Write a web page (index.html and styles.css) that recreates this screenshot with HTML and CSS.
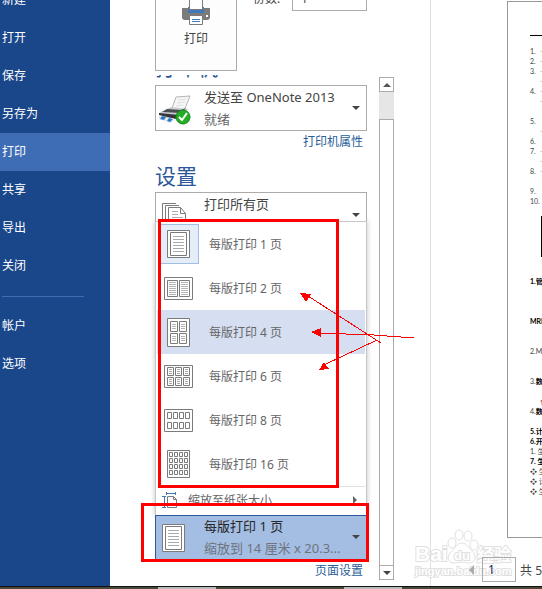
FILE: index.html
```html
<!DOCTYPE html>
<html lang="zh-CN">
<head>
    <meta charset="UTF-8">
    <meta name="viewport" content="width=device-width, initial-scale=1.0">
    <title>打印</title>
    <link rel="stylesheet" href="styles.css">
</head>
<body>

    <div class="window">
        <nav class="sidebar">
            <a href="#">新建</a>
            <a href="#">打开</a>
            <a href="#">保存</a>
            <a href="#">另存为</a>
            <a href="#" class="active">打印</a>
            <a href="#">共享</a>
            <a href="#">导出</a>
            <a href="#">关闭</a>
            <hr>
            <a href="#">帐户</a>
            <a href="#">选项</a>
        </nav>

        <main class="print-panel">
            <div class="print-header">
                <button type="button" class="print-button">
                    <svg width="28" height="32" viewBox="0 0 28 32">
                        <path d="M0 15h28v9a3 3 0 0 1-3 3H3a3 3 0 0 1-3-3z" fill="#7b7b7b"/>
                        <path d="M6 14h16v6H6z" fill="#3f7ab8"/>
                        <path d="M7.500 5.500h13v11h-13z" fill="#fff" stroke="#7b7b7b"/>
                        <path d="M7.500 22.500h13v9h-13z" fill="#fff" stroke="#7b7b7b"/>
                        <path d="M10 26.500h8M10 28.500h8" stroke="#3f7ab8"/>
                        <path d="M24 22h2v2h-2z" fill="#fff"/>
                    </svg>
                    <span>打印</span>
                </button>
                <label for="copies">份数:</label>
                <input type="text" id="copies" class="copies" value="1">
            </div>

            <div class="scroll-area">
                <div class="options">
                    <h2 class="printer-title">打印机</h2>
                    <button type="button" class="combo">
                        <svg class="combo-icon" width="36" height="32" viewBox="0 0 36 32">
                            <path d="M18 3l14-1-6 15H13z" fill="#f6f6f6" stroke="#b5b5b5"/>
                            <path d="M20 6l8-1M19 9l8-1M18 12l7-1" stroke="#ddd"/>
                            <path d="M1 19l12-6 17 2-7 9H6z" fill="#c9cccf"/>
                            <path d="M9 15l14 1 5-2-5 5-19-1z" fill="#4a4d52"/>
                            <path d="M1 19l20 2-3 4-17-4z" fill="#33363a"/>
                            <path d="M1 22l16 4-5 3-11-4z" fill="#e2e7ec"/>
                            <path d="M4 22l4 1-2 3-4-1zM11 24l4 1-3 3-3-1z" fill="#2b79c4"/>
                            <circle cx="25" cy="23" r="7" fill="#23ae25" stroke="#138a18"/>
                            <path d="M21 23l3 3 5-7" fill="none" stroke="#fff" stroke-width="2"/>
                        </svg>
                        <span class="combo-text">
                            <span>发送至 OneNote 2013</span>
                            <span class="sub">就绪</span>
                        </span>
                        <span class="arrow-down"></span>
                    </button>
                    <div class="link-row"><a href="#">打印机属性</a></div>

                    <h2>设置</h2>
                    <button type="button" class="combo combo-pages">
                        <svg class="combo-icon" width="26" height="28" viewBox="0 0 26 28" fill="none" stroke="#7b7b7b">
                            <path d="M14 2.500H.500V28M17 4.500H3.500V28"/>
                            <path d="M6.500 28V6.500h12l5 6V28M18.500 6.500v6h5"/>
                            <path d="M10 10.500h6M10 13.500h6M10 16.500h11M10 19.500h11M10 22.500h11" stroke="#aaa"/>
                        </svg>
                        <span class="combo-text"><span>打印所有页</span></span>
                        <span class="arrow-down"></span>
                    </button>

                    <div class="menu" role="listbox" aria-label="每版打印页数">
                        <button type="button" class="menu-item selected" role="option" aria-selected="true">
                            <span class="menu-icon"><svg width="23" height="28"><use href="#page-1"/></svg></span>每版打印 1 页
                        </button>
                        <button type="button" class="menu-item" role="option">
                            <span class="menu-icon">
                                <svg width="29" height="23" fill="none" stroke="#7b7b7b">
                                    <path d="M.500 .500h28v22h-28zM3.500 3.500h10v16h-10zM15.500 3.500h10v16h-10z"/>
                                    <path d="M5 5.500h7M5 7.500h7M5 9.500h7M5 11.500h7M5 13.500h7M5 15.500h7M5 17.500h7M17 5.500h7M17 7.500h7M17 9.500h7M17 11.500h7M17 13.500h7M17 15.500h7M17 17.500h7" stroke="#b5b5b5"/>
                                </svg>
                            </span>每版打印 2 页
                        </button>
                        <button type="button" class="menu-item hover" role="option">
                            <span class="menu-icon">
                                <svg width="23" height="29" fill="#fff" stroke="#7b7b7b">
                                    <path d="M.500 .500h22v28h-22z"/>
                                    <path d="M3.500 3.500h7v10h-7zM12.500 3.500h7v10h-7zM3.500 15.500h7v10h-7zM12.500 15.500h7v10h-7z"/>
                                    <path d="M5 6.500h4M5 8.500h4M5 10.500h4M14 6.500h4M14 8.500h4M14 10.500h4M5 18.500h4M5 20.500h4M5 22.500h4M14 18.500h4M14 20.500h4M14 22.500h4" stroke="#b5b5b5"/>
                                </svg>
                            </span>每版打印 4 页
                        </button>
                        <button type="button" class="menu-item" role="option">
                            <span class="menu-icon">
                                <svg width="29" height="23" fill="none" stroke="#7b7b7b">
                                    <path d="M.500 .500h28v22h-28z"/>
                                    <path d="M3.500 2.500h6v8h-6zM11.500 2.500h6v8h-6zM19.500 2.500h6v8h-6zM3.500 12.500h6v8h-6zM11.500 12.500h6v8h-6zM19.500 12.500h6v8h-6z"/>
                                    <path d="M5 4.500h3M5 6.500h3M5 8.500h3M13 4.500h3M13 6.500h3M13 8.500h3M21 4.500h3M21 6.500h3M21 8.500h3M5 14.500h3M5 16.500h3M5 18.500h3M13 14.500h3M13 16.500h3M13 18.500h3M21 14.500h3M21 16.500h3M21 18.500h3" stroke="#aaa"/>
                                </svg>
                            </span>每版打印 6 页
                        </button>
                        <button type="button" class="menu-item" role="option">
                            <span class="menu-icon">
                                <svg width="29" height="23" fill="none" stroke="#7b7b7b">
                                    <path d="M.500 .500h28v22h-28z"/>
                                    <path d="M3.500 3.500h4v6h-4zM9.500 3.500h4v6h-4zM15.500 3.500h4v6h-4zM21.500 3.500h4v6h-4zM3.500 13.500h4v6h-4zM9.500 13.500h4v6h-4zM15.500 13.500h4v6h-4zM21.500 13.500h4v6h-4z"/>
                                </svg>
                            </span>每版打印 8 页
                        </button>
                        <button type="button" class="menu-item" role="option">
                            <span class="menu-icon">
                                <svg width="23" height="28" fill="none" stroke="#7b7b7b">
                                    <path d="M.500 .500h22v27h-22z"/>
                                    <path d="M2.500 2.500h3v4h-3zM7.500 2.500h3v4h-3zM12.500 2.500h3v4h-3zM17.500 2.500h3v4h-3zM2.500 8.500h3v4h-3zM7.500 8.500h3v4h-3zM12.500 8.500h3v4h-3zM17.500 8.500h3v4h-3zM2.500 14.500h3v4h-3zM7.500 14.500h3v4h-3zM12.500 14.500h3v4h-3zM17.500 14.500h3v4h-3zM2.500 20.500h3v4h-3zM7.500 20.500h3v4h-3zM12.500 20.500h3v4h-3zM17.500 20.500h3v4h-3z"/>
                                </svg>
                            </span>每版打印 16 页
                        </button>
                        <button type="button" class="menu-more">
                            <svg width="16" height="18" viewBox="0 0 16 18" fill="none">
                                <path d="M4.500 1v3M13.500 1v3M4.500 2.500h9M0 5.500h4M0 16.500h4M2.500 5.500v11" stroke="#3f7ab8"/>
                                <path d="M5.500 5.500h6l3 3v8h-9zM11.500 5.500v3h3" stroke="#7b7b7b"/>
                            </svg>
                            <span>缩放至纸张大小</span>
                            <span class="arrow-right"></span>
                        </button>
                    </div>

                    <button type="button" class="combo combo-open">
                        <svg class="combo-icon" width="23" height="28" viewBox="0 0 23 28">
                            <g id="page-1" fill="#fff" stroke="#7b7b7b">
                                <path d="M.500 .500h22v27h-22z"/>
                                <path d="M3.500 2.500h16v23h-16z"/>
                                <path d="M6 6.500h11M6 9.500h11M6 12.500h11M6 15.500h11M6 18.500h11M6 21.500h11" stroke="#aaa"/>
                            </g>
                        </svg>
                        <span class="combo-text">
                            <span>每版打印 1 页</span>
                            <span class="sub">缩放到 14 厘米 x 20.3...</span>
                        </span>
                        <span class="arrow-down"></span>
                    </button>
                    <div class="link-row"><a href="#">页面设置</a></div>
                </div>

                <div class="scrollbar">
                    <button type="button" aria-label="向上滚动"><span class="arrow-up"></span></button>
                    <div class="thumb"></div>
                    <button type="button" aria-label="向下滚动"><span class="arrow-down"></span></button>
                </div>
            </div>
        </main>

        <section class="preview">
            <div class="paper">
                <div class="paper-rule"></div>
                <ul class="paper-lines">
                    <li>1.<i>-</i></li>
                    <li>2.<i>-</i></li>
                    <li>3.<i>-</i></li>
                    <li><i>-</i></li>
                    <li>4.<i>-</i></li>
                    <li><i>-</i></li>
                    <li></li>
                    <li>5.</li>
                    <li><i>-</i></li>
                    <li>6.</li>
                    <li>7.<i>-</i></li>
                    <li><i>-</i></li>
                    <li>8.<i>-</i></li>
                    <li></li>
                    <li>9.</li>
                    <li>10.</li>
                </ul>
                <div class="paper-figure"></div>
                <ul class="paper-lines">
                    <li><b>1.管</b></li>
                    <li></li>
                    <li></li>
                    <li></li>
                    <li><b>MRP</b></li>
                    <li></li>
                    <li></li>
                    <li>2.MRP</li>
                    <li></li>
                    <li></li>
                    <li>3.<b>数</b></li>
                    <li></li>
                    <li class="indent">仓</li>
                    <li>4.<b>数</b></li>
                    <li></li>
                    <li><b>5.计</b></li>
                    <li><b>6.开</b></li>
                    <li>1. 生</li>
                    <li><b>7. 生</b></li>
                    <li>❖ 生</li>
                    <li>❖ 计</li>
                    <li>❖ 生</li>
                </ul>
            </div>
            <div class="pager">
                <button type="button" class="prev" aria-label="上一页"><span class="arrow-left"></span></button>
                <input type="text" value="1" aria-label="当前页">
                <span>共 5</span>
            </div>
        </section>

        <!-- Red marks drawn over the panel -->
        <div class="mark mark-list"></div>
        <div class="mark mark-combo"></div>
        <svg class="mark-arrows" width="120" height="84" viewBox="0 0 120 84" shape-rendering="crispEdges">
            <path d="M10 7L83 54M20 44L76 46L116 49M28 75L79 51" fill="none" stroke="#f00"/>
            <path d="M2 4l11 1-5 8zM13 43l10-4v9zM21 81l5-8 5 7z" fill="#f00"/>
        </svg>

        <svg class="watermark" width="100" height="50" viewBox="0 0 100 50">
            <g fill="#fff" stroke="#d4d4d4">
                <text x="1" y="32" class="wm-big">Bai</text>
                <ellipse cx="38" cy="14" rx="4" ry="5"/>
                <ellipse cx="45" cy="6" rx="4" ry="5"/>
                <ellipse cx="54" cy="7" rx="4" ry="5"/>
                <ellipse cx="60" cy="16" rx="4" ry="5"/>
                <path d="M48 14c5 0 6 5 10 8s5 11-2 12c-4 0-5-1-8-1s-5 1-9 1c-6-1-6-8-2-11s6-9 11-9z"/>
                <text x="40" y="31" class="wm-du">du</text>
                <text x="63" y="32" class="wm-cn">经验</text>
                <text x="1" y="46" class="wm-small">jingyan.baidu.com</text>
            </g>
        </svg>
    </div>
    <div class="taskbar"><span></span><span></span></div>

</body>
</html>
```
FILE: styles.css
```css
* {
    box-sizing: border-box;
}
body {
    margin: 0;
    height: 100vh;
    display: flex;
    flex-direction: column;
    overflow: hidden;
    background-color: #fff;
    color: #444;
    font-family: "Noto Sans", "Noto Sans CJK SC", sans-serif;
    font-size: 12px;
}
button, input {
    font: inherit;
    color: inherit;
    padding: 0;
    margin: 0;
    background: none;
    border: none;
    border-radius: 0;
}
svg {
    display: block;
    flex: none;
}
.window {
    position: relative;
    flex: 1;
    min-height: 0;
    display: flex;
    overflow: hidden;
}

/* Left navigation */
.sidebar {
    flex: none;
    width: 110px;
    background-color: #1a478a;
}
.sidebar a {
    display: block;
    height: 38px;
    line-height: 38px;
    padding-left: 2px;
    color: #fff;
    text-decoration: none;
}
.sidebar a:first-child {
    margin-top: -19px;
}
.sidebar a.active {
    background-color: #3e6db5;
}
.sidebar hr {
    margin: 11px 26px 10px 2px;
    border: none;
    border-top: 1px solid #3e6db5;
}

/* Print options */
.print-panel {
    flex: none;
    width: 321px;
    display: flex;
    flex-direction: column;
    padding-left: 33px;
    border-right: 1px solid #e1e1e1;
}
.print-header {
    flex: none;
    display: flex;
    height: 94px;
    margin-top: -19px;
    padding: 0 12px;
}
.print-button {
    width: 82px;
    height: 90px;
    margin-right: 16px;
    padding-bottom: 12px;
    display: flex;
    flex-direction: column;
    align-items: center;
    justify-content: center;
    gap: 4px;
    background-color: #fdfdfd;
    border: 1px solid #ababab;
}
.print-header label {
    width: 39px;
    line-height: 36px;
}
.copies {
    width: 75px;
    height: 26px;
    margin-top: 4px;
    padding-left: 8px;
    border: 1px solid #ababab;
}
.scroll-area {
    flex: 1;
    min-height: 0;
    display: flex;
}
.options {
    width: 236px;
    padding: 0 12px;
    overflow: hidden;
}
h2 {
    margin: 9px 0 2px;
    line-height: 28px;
    font-size: 21px;
    font-weight: normal;
    color: #2b579a;
}
.printer-title {
    margin: -22px 0 4px;
}
.combo {
    width: 100%;
    height: 46px;
    display: flex;
    align-items: center;
    padding: 0 6px 0 48px;
    position: relative;
    text-align: left;
    font-size: 13px;
    background-color: #fff;
    border: 1px solid #ababab;
}
.combo-icon {
    position: absolute;
    left: 2px;
    top: 8px;
}
.combo-text {
    flex: 1;
    white-space: nowrap;
}
.combo-text span {
    display: block;
    line-height: 22px;
}
.combo-text .sub {
    color: #6a6a6a;
}
.combo-pages {
    height: 29px;
    border-bottom: none;
    overflow: hidden;
}
.combo-pages .combo-icon {
    left: 6px;
    top: 8px;
}
.combo-pages .combo-text {
    align-self: flex-start;
}
.combo-pages .arrow-down {
    align-self: flex-end;
    margin-bottom: 4px;
}
.combo-open {
    height: 45px;
    padding-bottom: 2px;
    color: #262626;
    background-color: #a3bde3;
    border-color: #2b579a;
}
.combo-open .combo-icon {
    left: 6px;
}
.combo-open .sub {
    color: #6f747c;
}
.link-row {
    height: 22px;
    line-height: 22px;
    padding-right: 4px;
    text-align: right;
}
.link-row a {
    color: #2a6099;
    text-decoration: none;
}

/* Arrow heads */
.arrow-down, .arrow-up {
    border: 4px solid transparent;
    border-bottom-width: 0;
    border-top-color: #444;
}
.arrow-up {
    border-width: 0 4px 4px;
    border-bottom-color: #555;
}
.arrow-right {
    border: 4px solid transparent;
    border-right-width: 0;
    border-left-color: #666;
}
.arrow-left {
    border: 5px solid transparent;
    border-left-width: 0;
    border-right-color: #aaa;
}

/* Pages per sheet menu */
.menu {
    padding: 0 1px;
    background-color: #fff;
    border: 1px solid #c6c6c6;
    border-bottom: none;
    box-shadow: 0 0 5px rgba(0, 0, 0, 0.25);
}
.menu-item {
    width: 100%;
    height: 44px;
    display: flex;
    align-items: center;
    gap: 10px;
    padding-left: 1px;
    color: #666;
}
.menu-item.hover {
    background-color: #d5dff1;
}
.menu-icon {
    width: 41px;
    height: 40px;
    display: flex;
    align-items: center;
    justify-content: center;
}
.selected .menu-icon {
    background-color: #e5edf9;
    border: 1px solid #a3bde3;
}
.menu-more {
    width: 100%;
    height: 29px;
    display: flex;
    align-items: flex-start;
    gap: 10px;
    padding: 4px 8px 0 5px;
    overflow: hidden;
    text-align: left;
    color: #666;
    border-top: 1px solid #e1e1e1;
}
.menu-more span:nth-child(2) {
    flex: 1;
}
.menu-more .arrow-right {
    margin-top: 5px;
}

/* Scrollbar */
.scrollbar {
    width: 15px;
    margin: 2px 0 6px;
    display: flex;
    flex-direction: column;
    background-color: #e6e6e6;
}
.scrollbar button {
    height: 15px;
    display: flex;
    align-items: center;
    justify-content: center;
    background-color: #fff;
    border: 1px solid #ababab;
}
.thumb {
    flex: 1;
    margin-top: 27px;
    background-color: #fff;
    border: 1px solid #ababab;
    border-bottom: none;
}

/* Page preview */
.preview {
    flex: 1;
    min-width: 0;
    display: flex;
    flex-direction: column;
    overflow: hidden;
}
.paper {
    flex: 1;
    min-height: 0;
    margin: 1px 0 0 76px;
    padding: 33px 0 0 22px;
    overflow: hidden;
    border: 1px solid #999;
    border-right: none;
}
.paper-rule {
    height: 1px;
    background-color: #000;
}
.paper-lines {
    margin: 10px 0 0;
    padding: 0;
    list-style: none;
    font-family: Lato, "Noto Sans CJK SC", sans-serif;
    font-size: 7px;
    line-height: 10px;
    white-space: nowrap;
}
.paper-lines li {
    height: 10px;
    display: flex;
}
.paper-lines i {
    margin-left: auto;
    width: 2px;
    overflow: hidden;
    color: #999;
}
.paper-lines b {
    color: #000;
}
.paper-lines .indent {
    padding-left: 10px;
}
.paper-figure {
    height: 41px;
    margin: 10px 0 19px 11px;
    background-color: #000;
}
.paper-figure + .paper-lines {
    margin-top: 0;
}
.pager {
    position: relative;
    z-index: 2;
    flex: none;
    height: 48px;
    display: flex;
    align-items: center;
    gap: 4px;
    padding: 15px 0 0 38px;
    white-space: nowrap;
}
.prev {
    width: 10px;
    display: flex;
    align-items: center;
}
.pager input {
    flex: none;
    width: 34px;
    height: 25px;
    padding-left: 5px;
    color: #1a2a66;
    border: 1px solid #ababab;
}

/* Marks over the page */
.mark {
    position: absolute;
    border: 3px solid #f00;
    pointer-events: none;
}
.mark-list {
    left: 158px;
    top: 219px;
    width: 181px;
    height: 269px;
}
.mark-combo {
    left: 141px;
    top: 503px;
    width: 228px;
    height: 59px;
}
.mark-arrows {
    position: absolute;
    left: 298px;
    top: 289px;
    pointer-events: none;
}
.watermark {
    position: absolute;
    z-index: 1;
    left: 414px;
    top: 529px;
    opacity: 0.7;
    pointer-events: none;
}
.watermark text {
    font-family: "Liberation Sans", "Noto Sans CJK SC", sans-serif;
    font-weight: bold;
    paint-order: stroke;
    stroke-width: 2px;
}
.wm-big {
    font-size: 21px;
}
.wm-du {
    font-size: 13px;
}
.wm-cn {
    font-size: 17px;
}
.wm-small {
    font-size: 11px;
}

/* Strip of the desktop taskbar */
.taskbar {
    flex: none;
    height: 3px;
    display: flex;
    gap: 128px;
    padding-left: 158px;
    background-color: #4a4638;
    border-top: 1px solid #111;
}
.taskbar span {
    width: 58px;
    background-color: #bbb;
}
```
